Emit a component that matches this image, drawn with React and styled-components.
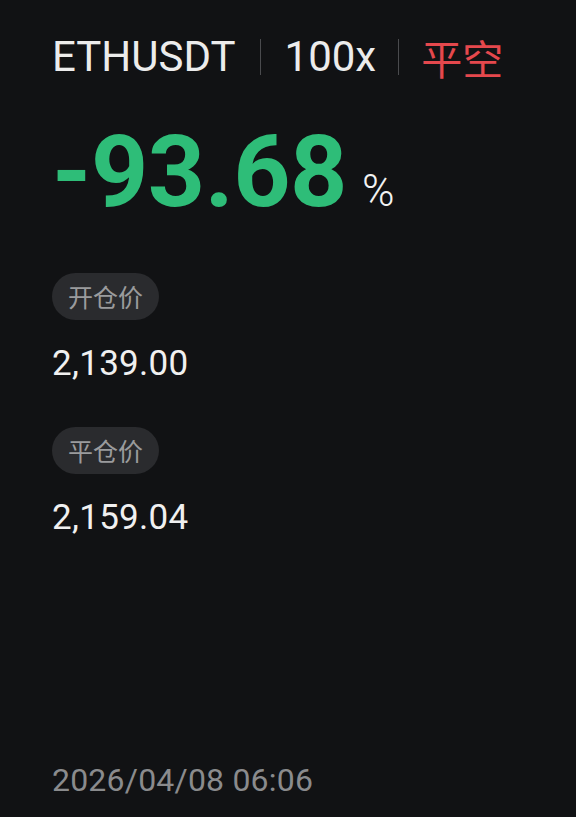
import React from 'react';
import styled, { createGlobalStyle } from 'styled-components';

const GlobalStyle = createGlobalStyle`
    html, body {
        margin: 0;
        padding: 0;
        background: #111214;
    }
    body {
        font-family: Roboto, "Noto Sans CJK SC", sans-serif;
    }
`;

const Page = styled.div`
    width: 576px;
    height: 817px;
    box-sizing: border-box;
    padding: 36px 0 0 52px;
    display: flex;
    flex-direction: column;
    background: #111214;
    color: #ececec;
`;

const Header = styled.div`
    display: flex;
    align-items: center;
    height: 42px;
    font-size: 42px;
    line-height: 42px;
    color: #ececec;
`;

const Divider = styled.span`
    width: 1px;
    height: 36px;
    background: #4a4b4e;
    margin: 0 ${p => p.$gap || 24}px;
`;

const Side = styled.span`
    color: #e5484d;
    font-family: "Noto Sans CJK SC", sans-serif;
    font-size: 41px;
`;

const Profit = styled.div`
    display: flex;
    align-items: baseline;
    margin-top: 44px;
`;

const Ratio = styled.span`
    font-size: 100px;
    font-weight: 700;
    line-height: 100px;
    color: #2ebd78;
    letter-spacing: -0.5px;
`;

const Percent = styled.span`
    font-size: 44px;
    font-weight: 300;
    color: #f2f2f2;
    margin-left: 15px;
`;

const Field = styled.div`
    display: flex;
    flex-direction: column;
    align-items: flex-start;
    margin-top: ${p => p.$top}px;
`;

const Label = styled.span`
    height: 47px;
    padding: 0 16px;
    border-radius: 24px;
    background: #2a2b2e;
    color: #9a9b9d;
    font-family: "Noto Sans CJK SC", sans-serif;
    font-size: 25px;
    line-height: 47px;
`;

const Value = styled.div`
    margin-top: 24px;
    font-size: 35px;
    line-height: 40px;
    color: #f0f0f0;
    letter-spacing: 0.3px;
`;

const Time = styled.div`
    margin-top: auto;
    margin-bottom: 18px;
    font-size: 32px;
    letter-spacing: 0.2px;
    color: #8a8b8d;
`;

export default function App() {
    return (
        <>
            <GlobalStyle />
            <Page>
                <Header>
                    <span>ETHUSDT</span>
                    <Divider />
                    <span>100x</span>
                    <Divider $gap={22} />
                    <Side>平空</Side>
                </Header>
                <Profit>
                    <Ratio>-93.68</Ratio>
                    <Percent>%</Percent>
                </Profit>
                <Field $top={51}>
                    <Label>开仓价</Label>
                    <Value>2,139.00</Value>
                </Field>
                <Field $top={43}>
                    <Label>平仓价</Label>
                    <Value>2,159.04</Value>
                </Field>
                <Time>2026/04/08 06:06</Time>
            </Page>
        </>
    );
}
